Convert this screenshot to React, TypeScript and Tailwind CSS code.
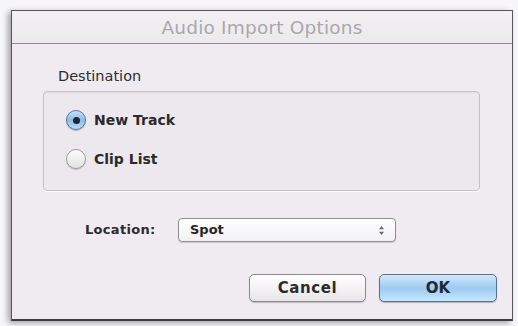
import React from "react";

const font = { fontFamily: '"DejaVu Sans", "Lucida Grande", Verdana, sans-serif' };

function Radio({ checked }: { checked?: boolean }) {
  return checked ? (
    <div className="w-[20px] h-[20px] rounded-full border border-[#56799f] bg-gradient-to-b from-[#c7e1f7] via-[#8dbbe6] to-[#b8dcf8] shadow-[0_1px_1px_rgba(0,0,0,0.25)] flex items-center justify-center shrink-0">
      <div className="w-[7px] h-[7px] rounded-full bg-[#1b2633]" />
    </div>
  ) : (
    <div className="w-[20px] h-[20px] rounded-full border border-[#9c9a9e] bg-gradient-to-b from-[#fcfcfc] to-[#e3e1e4] shadow-[0_1px_1px_rgba(0,0,0,0.2)] shrink-0" />
  );
}

export default function App() {
  return (
    <div className="w-[518px] h-[326px] bg-[#f7f6f8] pl-[11px] pt-[10px] overflow-hidden" style={font}>
      <div className="w-[502px] h-[311px] border border-[#58565b] border-b-2 border-b-[#3e3c40] bg-[#efebf0] shadow-[-3px_2px_6px_rgba(0,0,0,0.35)] flex flex-col">
        <div className="h-[33px] shrink-0 border-b border-[#8e8b91] bg-gradient-to-b from-[#f4f1f5] to-[#ece9ed] flex items-center justify-center pt-[2px]">
          <span className="text-[18.5px] text-[#aaa7ad] tracking-[0.2px]">Audio Import Options</span>
        </div>
        <div className="flex flex-col pl-[31px] pr-[32px]">
          <div className="mt-[24px] ml-[15px] text-[14.5px] leading-[17px] text-[#2e2d30]">Destination</div>
          <div className="mt-[6px] w-[437px] h-[100px] rounded-[4px] border border-[#c6c3c8] bg-[#ece8ed] shadow-[inset_0_1px_1px_rgba(0,0,0,0.06),0_1px_0_rgba(255,255,255,0.7)] pl-[22px] pt-[18px] flex flex-col gap-[19px]">
            <div className="flex items-center gap-[8px] h-[20px]">
              <Radio checked />
              <span className="text-[14px] font-bold text-[#2a2a2c]">New Track</span>
            </div>
            <div className="flex items-center gap-[8px] h-[20px]">
              <Radio />
              <span className="text-[14px] font-bold text-[#2a2a2c]">Clip List</span>
            </div>
          </div>
        </div>
        <div className="mt-[27px] flex items-center pl-[73px]">
          <span className="w-[93px] text-[13px] font-bold text-[#2c2b2e] tracking-[0.3px]">Location:</span>
          <div className="w-[218px] h-[24px] rounded-[4px] border border-[#8f8d92] bg-gradient-to-b from-[#ffffff] to-[#f1f0f2] shadow-[0_1px_1px_rgba(0,0,0,0.15)] flex items-center pl-[11px] pr-[10px]">
            <span className="flex-1 text-[13px] font-bold text-[#262528]">Spot</span>
            <svg width="7" height="11" viewBox="0 0 7 11">
              <path d="M3.5 1 L6 4.3 L1 4.3 Z" fill="#6b696e" />
              <path d="M3.5 10 L6 6.7 L1 6.7 Z" fill="#6b696e" />
            </svg>
          </div>
        </div>
        <div className="mt-[32px] flex justify-end gap-[13px] pr-[15px]">
          <div className="w-[117px] h-[28px] rounded-[5px] border border-[#8d8b90] bg-gradient-to-b from-[#ffffff] via-[#f3f2f4] to-[#e6e5e8] shadow-[0_1px_1px_rgba(0,0,0,0.2)] flex items-center justify-center">
            <span className="text-[15px] font-bold text-[#2c2b2e] tracking-[0.6px]">Cancel</span>
          </div>
          <div className="w-[118px] h-[28px] rounded-[5px] border border-[#56728f] bg-gradient-to-b from-[#d3e9fb] via-[#9ccaf1] to-[#c6e6fd] shadow-[0_1px_1px_rgba(0,0,0,0.25)] flex items-center justify-center">
            <span className="text-[15px] font-bold text-[#1d2a38]">OK</span>
          </div>
        </div>
      </div>
    </div>
  );
}
